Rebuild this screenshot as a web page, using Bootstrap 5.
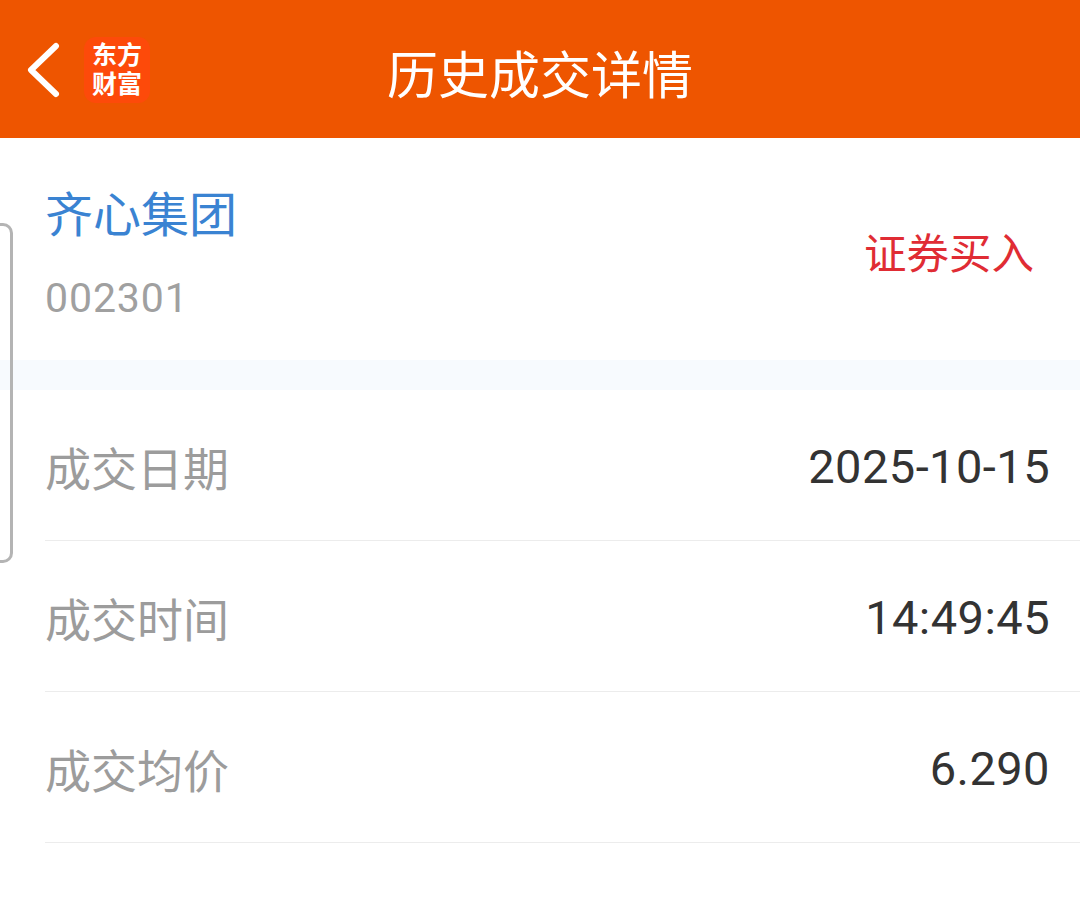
<!DOCTYPE html>
<html lang="zh">
<head>
    <meta charset="UTF-8">
    <title>历史成交详情</title>
    <link href="https://cdn.jsdelivr.net/npm/bootstrap@5.3.0/dist/css/bootstrap.min.css" rel="stylesheet">
    <style>
        body { font-family: "Roboto", "Noto Sans CJK SC", sans-serif; background: #fff; overflow: hidden; }
        .top-bar { height: 138px; background: #ee5500; color: #fff; font-size: 51px; padding-top: 16px; }
        .back-btn { left: 25px; top: 42px; }
        .app-logo { left: 84px; top: 37px; width: 66px; height: 66px; background: #fd4a0a; border-radius: 12px; font-size: 25px; line-height: 29px; font-weight: 700; }
        .stock-head { height: 222px; padding: 0 46px 0 45px; }
        .stock-name { color: #3a83d2; font-size: 48px; line-height: 56px; margin-top: 50px; }
        .stock-code { color: #a0a0a0; font-size: 41px; line-height: 48px; margin-top: 30px; letter-spacing: .9px; }
        .trade-type { color: #e02c34; font-size: 42.5px; padding-top: 12px; }
        .section-gap { height: 30px; background: #f7fafe; }
        .info-row { height: 151px; margin-left: 45px; padding-right: 30px; border-bottom: 1px solid #ececec; }
        .info-label { color: #9c9c9c; font-size: 46px; padding-top: 10px; }
        .info-val { color: #333; font-size: 47px; padding-top: 4px; letter-spacing: .45px; }
        .side-handle { left: 0; top: 223px; width: 13px; height: 340px; border: 3px solid #b4b4b4; border-left: 0; border-radius: 0 10px 10px 0; }
    </style>
</head>
<body>
    <div class="top-bar d-flex align-items-center justify-content-center position-relative">
        <svg class="back-btn position-absolute" width="36" height="56" viewBox="0 0 36 56"><path d="M31 4 L6 28 L31 52" fill="none" stroke="#fff" stroke-width="6" stroke-linecap="round" stroke-linejoin="round"/></svg>
        <div class="app-logo position-absolute d-flex flex-column align-items-center justify-content-center"><span>东方</span><span>财富</span></div>
        <span>历史成交详情</span>
    </div>
    <div class="stock-head d-flex justify-content-between align-items-center">
        <div class="align-self-start">
            <div class="stock-name">齐心集团</div>
            <div class="stock-code">002301</div>
        </div>
        <div class="trade-type">证券买入</div>
    </div>
    <div class="section-gap"></div>
    <div class="info-row d-flex justify-content-between align-items-center"><span class="info-label">成交日期</span><span class="info-val">2025-10-15</span></div>
    <div class="info-row d-flex justify-content-between align-items-center"><span class="info-label">成交时间</span><span class="info-val">14:49:45</span></div>
    <div class="info-row d-flex justify-content-between align-items-center"><span class="info-label">成交均价</span><span class="info-val">6.290</span></div>
    <div class="side-handle position-absolute"></div>
    <script src="https://cdn.jsdelivr.net/npm/bootstrap@5.3.0/dist/js/bootstrap.bundle.min.js"></script>
</body>
</html>
